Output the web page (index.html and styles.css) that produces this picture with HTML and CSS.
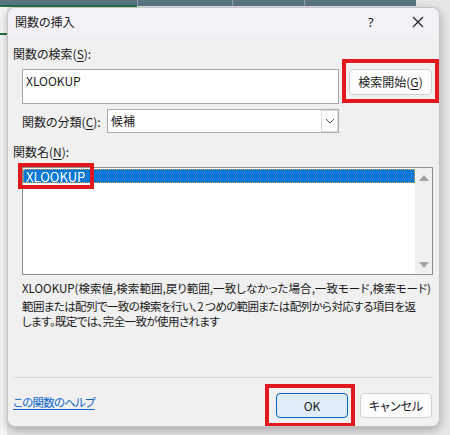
FILE: index.html
```html
<!DOCTYPE html>
<html lang="ja">
<head>
<meta charset="utf-8">
<title>関数の挿入</title>
<link rel="stylesheet" href="styles.css">
</head>
<body>
<div class="desktop">
  <div class="dialog">
    <div class="titlebar">
      <span class="title">関数の挿入</span>
      <span class="help">?</span>
      <span class="close">
        <svg width="12" height="12" viewBox="0 0 12 12"><path d="M1 1 L11 11 M11 1 L1 11" stroke="#1b1b1b" stroke-width="1.1" fill="none"/></svg>
      </span>
    </div>
    <div class="content">
      <div class="label">関数の検索(<u>S</u>):</div>
      <div class="search-row">
        <div class="textbox">XLOOKUP</div>
        <div class="mark-wrap">
          <button class="btn btn-search">検索開始(<u>G</u>)</button>
          <span class="annot annot-search"></span>
        </div>
      </div>
      <div class="cat-row">
        <span class="cat-label">関数の分類(<u>C</u>):</span>
        <div class="select">
          <span class="select-value">候補</span>
          <span class="select-drop">
            <svg width="10" height="6" viewBox="0 0 10 6"><path d="M1 1 L5 5 L9 1" stroke="#555" stroke-width="1" fill="none"/></svg>
          </span>
        </div>
      </div>
      <div class="label label-name">関数名(<u>N</u>):</div>
      <div class="listbox">
        <div class="items">
          <div class="item selected">XLOOKUP<span class="annot annot-item"></span></div>
        </div>
        <div class="scrollbar">
          <svg width="10" height="6" viewBox="0 0 10 6"><path d="M0 6 L5 0 L10 6 Z" fill="#a3a3a3"/></svg>
          <svg width="10" height="6" viewBox="0 0 10 6"><path d="M0 0 L10 0 L5 6 Z" fill="#a3a3a3"/></svg>
        </div>
      </div>
      <div class="desc">
        <p class="syntax">XLOOKUP(検索値,検索範囲,戻り範囲,一致しなかった場合,一致モード,検索モード)</p>
        <p class="explain">範囲または配列で一致の検索を行い、2 つめの範囲または配列から対応する項目を返<br>します。既定では、完全一致が使用されます</p>
      </div>
      <div class="sep"></div>
      <div class="footer">
        <a class="help-link" href="#">この関数のヘルプ</a>
        <div class="buttons">
          <div class="mark-wrap">
            <button class="btn btn-ok">OK</button>
            <span class="annot annot-ok"></span>
          </div>
          <button class="btn btn-cancel">キャンセル</button>
        </div>
      </div>
    </div>
  </div>
</div>
</body>
</html>
```

FILE: styles.css
```css
* { box-sizing: border-box; }

html, body {
  margin: 0;
  padding: 0;
}

body {
  width: 450px;
  height: 435px;
  overflow: hidden;
  font-family: "Noto Sans CJK JP", "Noto Sans", sans-serif;
  font-size: 12px;
  line-height: 16px;
  color: #1a1a1a;
  font-feature-settings: "palt";
}

.desktop {
  width: 450px;
  height: 435px;
  padding: 7px 0 0 7px;
  background:
    linear-gradient(#8fa1ab, #8fa1ab) 137px 0 / 1px 6px no-repeat,
    linear-gradient(#8fa1ab, #8fa1ab) 232px 0 / 1px 6px no-repeat,
    linear-gradient(#8fa1ab, #8fa1ab) 304px 0 / 1px 6px no-repeat,
    linear-gradient(#217346, #217346) 0 5px / 137px 2px no-repeat,
    linear-gradient(#5b7482, #5b7482) 0 0 / 416px 6px no-repeat,
    linear-gradient(#217346, #217346) 0 33px / 7px 2px no-repeat,
    linear-gradient(#f6f6f6, #f6f6f6) 0 6px / 7px 429px no-repeat,
    #e6e6e6;
}

.dialog {
  width: 433px;
  height: 420px;
  border: 1px solid #c4c4c4;
  border-radius: 8px;
  background: #f0f0f0;
  box-shadow: 0 3px 10px rgba(0, 0, 0, 0.28);
  overflow: hidden;
  display: flex;
  flex-direction: column;
}

.titlebar {
  height: 29px;
  flex: none;
  background: #f3f1f6;
  display: flex;
  align-items: center;
  padding-left: 7px;
}

.title {
  flex: 1;
  margin-top: -1px;
}

.help {
  font-family: "Noto Sans", sans-serif;
  font-size: 13px;
  width: 10px;
  margin-right: 34px;
  margin-top: -2px;
}

.close {
  display: flex;
  margin-right: 15px;
  margin-top: -2px;
}

.content {
  flex: 1;
  padding: 9px 6px 0 5px;
  display: flex;
  flex-direction: column;
}

.label {
  height: 16px;
}

u {
  text-decoration-thickness: 1px;
  text-underline-offset: 2px;
}

.search-row {
  margin: 7px 0 0 9px;
  display: flex;
  align-items: flex-start;
  gap: 10px;
}

.textbox {
  width: 317px;
  height: 35px;
  background: #fff;
  border: 1px solid #a6a6a6;
  padding: 3px 0 0 3px;
}

.mark-wrap {
  position: relative;
  display: flex;
}

.btn {
  font: inherit;
  font-feature-settings: "palt";
  color: #1a1a1a;
  background: #fdfdfd;
  border: 1px solid #d0d0d0;
  border-radius: 4px;
  padding: 0;
  height: 25px;
  width: 72px;
}

.btn-search {
  width: 83px;
  height: 26px;
  padding-bottom: 1px;
}

.annot {
  position: absolute;
  border: 4px solid #e3181f;
  pointer-events: none;
}

.annot-search {
  left: -7px;
  right: -7px;
  top: -10px;
  bottom: -8px;
}

.cat-row {
  margin: 5px 0 0 9px;
  height: 24px;
  display: flex;
  align-items: center;
}

.cat-label {
  width: 85px;
  margin-top: 2px;
}

.select {
  width: 232px;
  height: 24px;
  background: #fff;
  border: 1px solid #adadad;
  display: flex;
  align-items: stretch;
}

.select-value {
  flex: 1;
  padding-left: 3px;
  line-height: 22px;
}

.select-drop {
  width: 17px;
  border: 1px solid #dcdcdc;
  display: flex;
  align-items: center;
  justify-content: center;
}

.label-name {
  margin-top: 11px;
}

.listbox {
  margin: 7px 0 0 9px;
  height: 108px;
  border: 1px solid #8f8f8f;
  background: #fff;
  display: flex;
}

.items {
  flex: 1;
  padding-top: 1px;
}

.item {
  position: relative;
  height: 14px;
  line-height: 13px;
  padding-left: 2px;
  font-size: 13px;
}

.item.selected {
  background: #0078d7;
  color: #fff;
  border: 1px dotted #f0a35a;
}

.annot-item {
  left: -6px;
  top: -7px;
  width: 76px;
  height: 26px;
}

.scrollbar {
  width: 17px;
  background: #f0f0f0;
  display: flex;
  flex-direction: column;
  align-items: center;
  justify-content: space-between;
  padding: 7px 0 6px;
}

.desc {
  margin: 5px 0 0 9px;
  white-space: nowrap;
  font-size: 11.5px;
}

.desc p {
  margin: 0;
}

.syntax {
  letter-spacing: 0.03px;
}

.explain {
  margin-top: 3px !important;
  line-height: 15px;
  letter-spacing: -0.6px;
}

.sep {
  margin-top: 48px;
  height: 1px;
  background: #d9d9d9;
}

.footer {
  margin-top: 15px;
  display: flex;
  justify-content: space-between;
  align-items: flex-start;
}

.help-link {
  color: #0a64c8;
  text-decoration: underline;
  text-underline-offset: 2px;
  margin-top: 1px;
  font-size: 11.5px;
  letter-spacing: -0.8px;
}

.buttons {
  display: flex;
  gap: 12px;
  margin-right: 1px;
}

.btn-ok {
  background: #e0ecf8;
  border-color: #0067c0;
}

.annot-ok {
  left: -11px;
  right: -7px;
  top: -9px;
  bottom: -9px;
}
```
